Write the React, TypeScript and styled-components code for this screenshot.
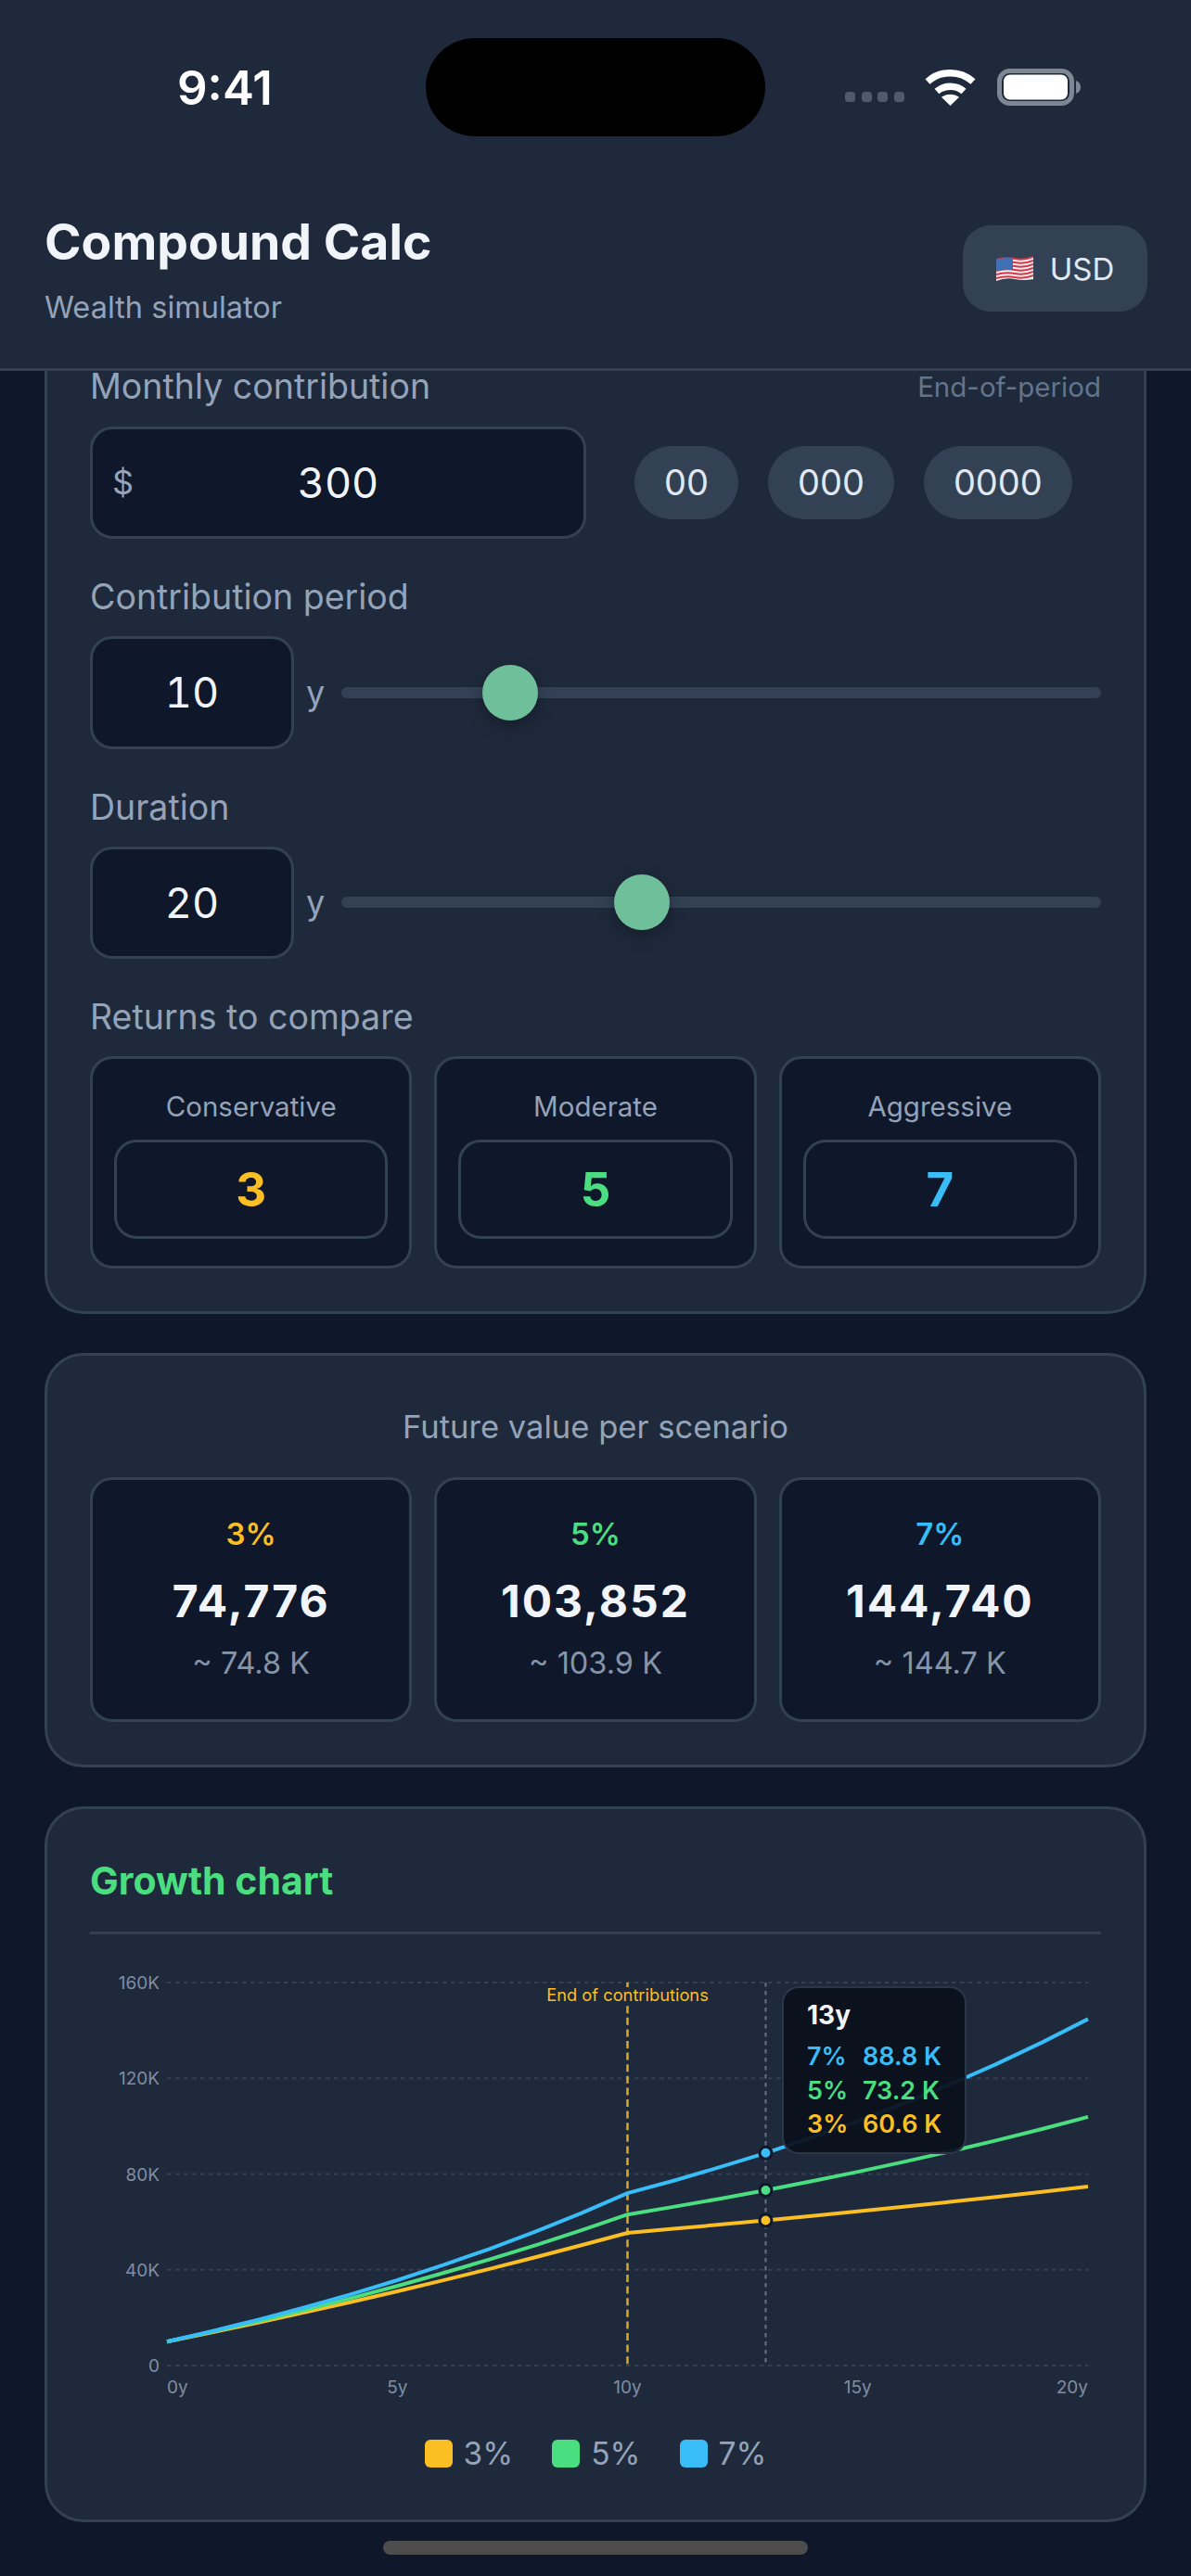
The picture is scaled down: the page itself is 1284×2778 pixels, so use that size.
import styled, { createGlobalStyle } from "styled-components";

const AMBER = "#fbbf24";
const GREEN = "#4ade80";
const BLUE = "#38bdf8";
const AXIS = "#808ea2";
const CARD_BG = "#1e293b";

const GlobalStyle = createGlobalStyle`
    html, body {
        margin: 0;
        background: #0f172a;
    }
    body {
        font-family: Inter, "Noto Sans", sans-serif;
        color: #f1f5f9;
    }
    * {
        box-sizing: border-box;
    }
`;

const Page = styled.div`
    width: 1284px;
    height: 2778px;
    overflow: hidden;
    background: #0f172a;
`;

const Header = styled.header`
    height: 400px;
    background: ${CARD_BG};
    border-bottom: 3px solid #334155;
    padding: 41px 47px 0 48px;
`;

const StatusBar = styled.div`
    display: flex;
    align-items: center;
    height: 106px;
    padding-left: 143px;
`;

const Time = styled.span`
    width: 104px;
    font-size: 51px;
    font-weight: 600;
    color: #fff;
    margin-right: 164px;
`;

const Island = styled.div`
    width: 366px;
    height: 106px;
    border-radius: 53px;
    background: #000;
    margin-right: 86px;
`;

const SignalDots = styled.div`
    display: flex;
    gap: 6.5px;
    margin: 20px 22px 0 0;
`;

const SignalDot = styled.span`
    width: 11px;
    height: 11px;
    border-radius: 3.5px;
    background: #4f5b6c;
`;

const StatusIcon = styled.svg<{ $gap?: number }>`
    display: block;
    flex: none;
    margin-left: ${p => p.$gap ?? 0}px;
`;

const TitleRow = styled.div`
    display: flex;
    justify-content: space-between;
    align-items: flex-start;
    margin-top: 86px;
`;

const AppTitle = styled.h1`
    margin: 0;
    font-size: 53.5px;
    line-height: 56px;
    font-weight: 700;
    color: #f1f5f9;
`;

const AppSubtitle = styled.p`
    margin: 23px 0 0;
    font-size: 32.5px;
    line-height: 40px;
    color: #94a3b8;
`;

const CurrencyButton = styled.button`
    display: flex;
    align-items: center;
    justify-content: center;
    gap: 18px;
    width: 199px;
    height: 93px;
    margin-top: 10px;
    border: none;
    border-radius: 30px;
    background: #334155;
    color: #e2e8f0;
    font: 400 33px Inter, sans-serif;
`;

const Main = styled.main`
    padding: 0 48px;
    display: flex;
    flex-direction: column;
    gap: 42px;
`;

const Card = styled.section<{ $clipped?: boolean }>`
    background: ${CARD_BG};
    border: 3px solid #334155;
    border-top-width: ${p => (p.$clipped ? 0 : 3)}px;
    border-radius: ${p => (p.$clipped ? "0 0 42px 42px" : "42px")};
    padding: ${p => (p.$clipped ? 0 : 46)}px 46px 46px;
`;

const FieldStack = styled.div`
    display: flex;
    flex-direction: column;
    gap: 40px;
`;

const LabelRow = styled.div`
    display: flex;
    justify-content: space-between;
    align-items: center;
    height: 34px;
    margin-bottom: 25.5px;
`;

const FieldLabel = styled.div`
    font-size: 37.5px;
    line-height: 46px;
    color: #94a3b8;
    margin-bottom: 19px;
`;

const InlineLabel = styled(FieldLabel)`
    margin-bottom: 0;
`;

const Hint = styled.span`
    font-size: 29.5px;
    color: #64748b;
`;

const InputRow = styled.div`
    display: flex;
    align-items: center;
`;

const NumberBox = styled.div<{ $width: number }>`
    position: relative;
    flex: none;
    display: flex;
    align-items: center;
    justify-content: center;
    width: ${p => p.$width}px;
    height: 121.5px;
    border: 3px solid #334155;
    border-radius: 24px;
    background: #0f172a;
    font-size: 45px;
    font-variant-numeric: tabular-nums;
    color: #f1f5f9;
`;

const Currency = styled.span`
    position: absolute;
    left: 21px;
    top: 50%;
    transform: translateY(-50%);
    font-size: 36px;
    color: #94a3b8;
`;

const Presets = styled.div`
    display: flex;
    gap: 32px;
    margin-left: 52px;
`;

const Preset = styled.div`
    height: 79px;
    padding: 0 32px;
    display: flex;
    align-items: center;
    border-radius: 40px;
    background: #334155;
    font-size: 38px;
    color: #e2e8f0;
`;

const Unit = styled.span`
    flex: none;
    width: 38px;
    margin-left: 13px;
    font-size: 36px;
    color: #94a3b8;
`;

const Track = styled.div`
    position: relative;
    flex: 1;
    height: 12px;
    border-radius: 6px;
    background: #334155;
`;

const Thumb = styled.div<{ $left: number }>`
    position: absolute;
    left: ${p => p.$left}px;
    top: 50%;
    width: 60px;
    height: 60px;
    margin: -30px 0 0 -30px;
    border-radius: 50%;
    background: #6fbf9b;
    box-shadow: 0 6px 18px rgba(0, 0, 0, 0.3);
`;

const ThreeCols = styled.div`
    display: grid;
    grid-template-columns: repeat(3, 1fr);
    gap: 24px;
`;

const ReturnCard = styled.div`
    height: 229px;
    padding: 33px 23px 0;
    border: 3px solid #334155;
    border-radius: 24px;
    background: #0f172a;
    text-align: center;
`;

const ReturnLabel = styled.div`
    font-size: 29.5px;
    line-height: 36px;
    color: #94a3b8;
    margin-bottom: 18px;
`;

const ReturnInput = styled.div<{ $color: string }>`
    height: 107px;
    display: flex;
    align-items: center;
    justify-content: center;
    border: 3px solid #334155;
    border-radius: 24px;
    font-size: 51px;
    font-weight: 700;
    color: ${p => p.$color};
`;

const SectionCaption = styled.div`
    font-size: 34.6px;
    line-height: 60px;
    text-align: center;
    color: #94a3b8;
    margin-bottom: 25px;
`;

const ResultCard = styled.div`
    height: 264px;
    display: flex;
    flex-direction: column;
    align-items: center;
    justify-content: center;
    border: 3px solid #334155;
    border-radius: 24px;
    background: #0f172a;
`;

const ResultRate = styled.div<{ $color: string }>`
    font-size: 33px;
    line-height: 36px;
    font-weight: 600;
    color: ${p => p.$color};
`;

const ResultValue = styled.div`
    margin-top: 28px;
    font-size: 48px;
    line-height: 54px;
    font-weight: 700;
    letter-spacing: 2px;
    color: #f1f5f9;
`;

const ResultApprox = styled.div`
    margin-top: 20px;
    font-size: 32.5px;
    line-height: 40px;
    color: #8494a9;
`;

const ChartTitle = styled.h2`
    margin: 0;
    padding-bottom: 24px;
    border-bottom: 3px solid #334155;
    font-size: 41px;
    line-height: 62px;
    font-weight: 700;
    color: ${GREEN};
`;

const ChartWrap = styled.div`
    position: relative;
    height: 500px;
    margin-top: 13px;
`;

const ChartSvg = styled.svg`
    display: block;
    font-family: Inter, sans-serif;
`;

const Tooltip = styled.div`
    position: absolute;
    left: 746px;
    top: 43px;
    width: 199px;
    height: 181px;
    padding: 12px 0 0 25px;
    border: 2px solid #2b3647;
    border-radius: 18px;
    background: rgba(11, 17, 29, 0.94);
`;

const TooltipTitle = styled.div`
    font-size: 28px;
    line-height: 34px;
    font-weight: 700;
    color: #f1f5f9;
    margin-bottom: 10px;
`;

const TooltipRow = styled.div<{ $color: string }>`
    display: grid;
    grid-template-columns: 60px auto;
    font-size: 27px;
    line-height: 36.5px;
    font-weight: 600;
    color: ${p => p.$color};
`;

const Legend = styled.div`
    display: flex;
    justify-content: center;
    gap: 42px;
    margin: 27px 0 5px;
`;

const LegendItem = styled.div`
    display: flex;
    align-items: center;
    gap: 12px;
    height: 40px;
    font-size: 33.5px;
    color: #94a3b8;
`;

const Swatch = styled.span<{ $color: string }>`
    width: 30px;
    height: 30px;
    border-radius: 6px;
    background: ${p => p.$color};
`;

const HomeBar = styled.div`
    width: 458px;
    height: 15px;
    margin: 20px auto 0;
    border-radius: 8px;
    background: #4d4d4d;
`;

// plot area inside the svg
const LEFT = 83;
const RIGHT = 1076;
const TOP = 39;
const BOTTOM = 452;

const futureValue = (rate: number, year: number) => {
    let total = 10000;
    for (let m = 1; m <= year * 12; m++) {
        total = total * (1 + rate / 1200) + (m <= 120 ? 300 : 0);
    }
    return total;
};

const xOf = (year: number) => LEFT + ((RIGHT - LEFT) * year) / 20;
const yOf = (value: number) => BOTTOM - ((BOTTOM - TOP) * value) / 160000;

const linePoints = (rate: number) =>
    Array.from({ length: 21 }, (_, y) => `${xOf(y).toFixed(1)},${yOf(futureValue(rate, y)).toFixed(1)}`).join(" ");

const scenarios = [
    { rate: 3, color: AMBER, name: "Conservative", value: "74,776", approx: "~ 74.8 K" },
    { rate: 5, color: GREEN, name: "Moderate", value: "103,852", approx: "~ 103.9 K" },
    { rate: 7, color: BLUE, name: "Aggressive", value: "144,740", approx: "~ 144.7 K" },
];

const WifiIcon = () => (
    <StatusIcon width="55" height="40" viewBox="0 0 55 40" fill="none" stroke="#fff" strokeWidth="7.5">
        <path d="M3 14C17 1.5 38 1.5 52 14" />
        <path d="M13 24.5C21 17.5 34 17.5 42 24.5" />
        <path d="M27.5 40L18 30.8C23.5 26.6 31.5 26.6 37 30.8Z" fill="#fff" stroke="none" />
    </StatusIcon>
);

const BatteryIcon = () => (
    <StatusIcon $gap={23} width="90" height="40" viewBox="0 0 90 40">
        <rect x="2.5" y="2.5" width="78" height="35" rx="11" fill="none" stroke="#7d8794" strokeWidth="5" />
        <rect x="7" y="6.5" width="69" height="27" rx="7" fill="#fff" />
        <path d="M85 13c3 1 5 3.500 5 7s-2 6-5 7z" fill="#7d8794" />
    </StatusIcon>
);

const FlagIcon = () => (
    <svg width="40" height="28" viewBox="0 0 40 28">
        <path d="M0 4Q10 1 20 3T40 1V25Q30 27 20 25T0 27Z" fill="#f6f1f1" />
        {[3, 7, 11, 15, 19, 23].map(y => (
            <path key={y} d={`M0 ${y + 1}Q10 ${y - 2} 20 ${y}T40 ${y - 2}`} fill="none" stroke="#d4374a" strokeWidth="2" />
        ))}
        <path d="M0 4Q10 1 18 2.700V15Q9 13.500 0 16Z" fill="#3f70b5" />
    </svg>
);

const GrowthChart = () => (
    <ChartWrap>
        <ChartSvg width="1090" height="500" viewBox="0 0 1090 500">
            {[0, 40, 80, 120, 160].map(k => (
                <g key={k}>
                    <line x1={LEFT} x2={RIGHT} y1={yOf(k * 1000)} y2={yOf(k * 1000)} stroke="#334155" strokeWidth="2" strokeDasharray="4.500 4.500" />
                    <text x={LEFT - 8} y={yOf(k * 1000) + 7} textAnchor="end" fontSize="19" fill={AXIS}>
                        {k === 0 ? "0" : `${k}K`}
                    </text>
                </g>
            ))}
            {[0, 5, 10, 15, 20].map(y => (
                <text key={y} x={xOf(y)} y="482" textAnchor={y === 0 ? "start" : y === 20 ? "end" : "middle"} fontSize="19" fill={AXIS}>
                    {y}y
                </text>
            ))}
            <line x1={xOf(10)} x2={xOf(10)} y1={TOP} y2={BOTTOM} stroke={AMBER} strokeOpacity="0.85" strokeWidth="2.500" strokeDasharray="8 4.600" />
            <text x={xOf(10)} y="59" textAnchor="middle" fontSize="18.3" fill={AMBER} stroke={CARD_BG} strokeWidth="10" paintOrder="stroke">
                End of contributions
            </text>
            <line x1={xOf(13)} x2={xOf(13)} y1={TOP} y2={BOTTOM} stroke="#64748b" strokeWidth="2" strokeDasharray="4.500 4.500" />
            {scenarios.map(s => (
                <polyline key={s.rate} points={linePoints(s.rate)} fill="none" stroke={s.color} strokeWidth="4" strokeLinejoin="round" />
            ))}
            {scenarios.map(s => (
                <circle key={s.rate} cx={xOf(13)} cy={yOf(futureValue(s.rate, 13))} r="6.500" fill={s.color} stroke="#0f172a" strokeWidth="3" />
            ))}
        </ChartSvg>
        <Tooltip>
            <TooltipTitle>13y</TooltipTitle>
            <TooltipRow $color={BLUE}><span>7%</span><span>88.8 K</span></TooltipRow>
            <TooltipRow $color={GREEN}><span>5%</span><span>73.2 K</span></TooltipRow>
            <TooltipRow $color={AMBER}><span>3%</span><span>60.6 K</span></TooltipRow>
        </Tooltip>
    </ChartWrap>
);

const App = () => {
    return (
        <Page>
            <GlobalStyle />
            <Header>
                <StatusBar>
                    <Time>9:41</Time>
                    <Island />
                    <SignalDots>
                        <SignalDot />
                        <SignalDot />
                        <SignalDot />
                        <SignalDot />
                    </SignalDots>
                    <WifiIcon />
                    <BatteryIcon />
                </StatusBar>
                <TitleRow>
                    <div>
                        <AppTitle>Compound Calc</AppTitle>
                        <AppSubtitle>Wealth simulator</AppSubtitle>
                    </div>
                    <CurrencyButton>
                        <FlagIcon />
                        USD
                    </CurrencyButton>
                </TitleRow>
            </Header>
            <Main>
                <Card $clipped>
                    <FieldStack>
                        <div>
                            <LabelRow>
                                <InlineLabel>Monthly contribution</InlineLabel>
                                <Hint>End-of-period</Hint>
                            </LabelRow>
                            <InputRow>
                                <NumberBox $width={535}>
                                    <Currency>$</Currency>
                                    300
                                </NumberBox>
                                <Presets>
                                    <Preset>00</Preset>
                                    <Preset>000</Preset>
                                    <Preset>0000</Preset>
                                </Presets>
                            </InputRow>
                        </div>
                        <div>
                            <FieldLabel>Contribution period</FieldLabel>
                            <InputRow>
                                <NumberBox $width={220}>10</NumberBox>
                                <Unit>y</Unit>
                                <Track>
                                    <Thumb $left={182} />
                                </Track>
                            </InputRow>
                        </div>
                        <div>
                            <FieldLabel>Duration</FieldLabel>
                            <InputRow>
                                <NumberBox $width={220}>20</NumberBox>
                                <Unit>y</Unit>
                                <Track>
                                    <Thumb $left={324} />
                                </Track>
                            </InputRow>
                        </div>
                        <div>
                            <FieldLabel>Returns to compare</FieldLabel>
                            <ThreeCols>
                                {scenarios.map(s => (
                                    <ReturnCard key={s.rate}>
                                        <ReturnLabel>{s.name}</ReturnLabel>
                                        <ReturnInput $color={s.color}>{s.rate}</ReturnInput>
                                    </ReturnCard>
                                ))}
                            </ThreeCols>
                        </div>
                    </FieldStack>
                </Card>
                <Card>
                    <SectionCaption>Future value per scenario</SectionCaption>
                    <ThreeCols>
                        {scenarios.map(s => (
                            <ResultCard key={s.rate}>
                                <ResultRate $color={s.color}>{s.rate}%</ResultRate>
                                <ResultValue>{s.value}</ResultValue>
                                <ResultApprox>{s.approx}</ResultApprox>
                            </ResultCard>
                        ))}
                    </ThreeCols>
                </Card>
                <Card>
                    <ChartTitle>Growth chart</ChartTitle>
                    <GrowthChart />
                    <Legend>
                        {scenarios.map(s => (
                            <LegendItem key={s.rate}>
                                <Swatch $color={s.color} />
                                {s.rate}%
                            </LegendItem>
                        ))}
                    </Legend>
                </Card>
            </Main>
            <HomeBar />
        </Page>
    );
};

export default App;
